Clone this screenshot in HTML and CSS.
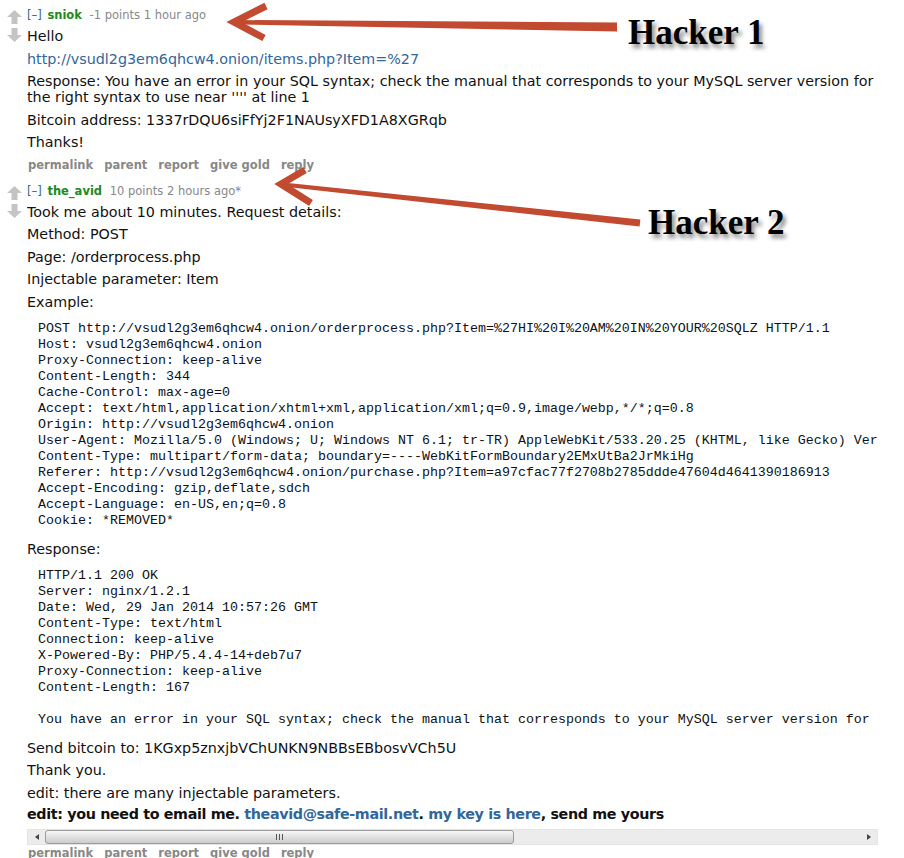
FILE: index.html
```html
<!DOCTYPE html>
<html>
<head>
<meta charset="utf-8">
<title>Comments</title>
<link rel="stylesheet" href="styles.css">
</head>
<body>
<div class="page">
  <div class="comment">
    <div class="midcol">
      <svg class="vote" viewBox="0 0 15 14"><path d="M7.5 0 L15 7 L10.5 7 L10.5 14 L4.5 14 L4.5 7 L0 7 Z"/></svg>
      <svg class="vote" viewBox="0 0 15 14"><path d="M7.5 14 L15 7 L10.5 7 L10.5 0 L4.5 0 L4.5 7 L0 7 Z"/></svg>
    </div>
    <div class="entry">
      <p class="tagline"><span class="expand">[–]</span> <span class="author">sniok</span> <span class="score">-1 points 1 hour ago</span></p>
      <div class="md">
        <p><span>Hello</span></p>
        <p><a href="#">http://vsudl2g3em6qhcw4.onion/items.php?Item=%27</a></p>
        <p>Response: You have an error in your SQL syntax; check the manual that corresponds to your MySQL server version for the right syntax to use near '''' at line 1</p>
        <p>Bitcoin address: 1337rDQU6siFfYj2F1NAUsyXFD1A8XGRqb</p>
        <p>Thanks!</p>
      </div>
      <ul class="flat-list"><li>permalink</li><li>parent</li><li>report</li><li>give gold</li><li>reply</li></ul>
    </div>
  </div>

  <div class="comment second">
    <div class="midcol">
      <svg class="vote" viewBox="0 0 15 14"><path d="M7.5 0 L15 7 L10.5 7 L10.5 14 L4.5 14 L4.5 7 L0 7 Z"/></svg>
      <svg class="vote" viewBox="0 0 15 14"><path d="M7.5 14 L15 7 L10.5 7 L10.5 0 L4.5 0 L4.5 7 L0 7 Z"/></svg>
    </div>
    <div class="entry">
      <p class="tagline"><span class="expand">[–]</span> <span class="author">the_avid</span> <span class="score">10 points 2 hours ago*</span></p>
      <div class="md">
        <p>Took me about 10 minutes. Request details:</p>
        <p>Method: POST</p>
        <p>Page: /orderprocess.php</p>
        <p>Injectable parameter: Item</p>
        <p>Example:</p>
<pre>POST http://vsudl2g3em6qhcw4.onion/orderprocess.php?Item=%27HI%20I%20AM%20IN%20YOUR%20SQLZ HTTP/1.1
Host: vsudl2g3em6qhcw4.onion
Proxy-Connection: keep-alive
Content-Length: 344
Cache-Control: max-age=0
Accept: text/html,application/xhtml+xml,application/xml;q=0.9,image/webp,*/*;q=0.8
Origin: http://vsudl2g3em6qhcw4.onion
User-Agent: Mozilla/5.0 (Windows; U; Windows NT 6.1; tr-TR) AppleWebKit/533.20.25 (KHTML, like Gecko) Version/5.0.4 Safari/533.20.27
Content-Type: multipart/form-data; boundary=----WebKitFormBoundary2EMxUtBa2JrMkiHg
Referer: http://vsudl2g3em6qhcw4.onion/purchase.php?Item=a97cfac77f2708b2785ddde47604d4641390186913
Accept-Encoding: gzip,deflate,sdch
Accept-Language: en-US,en;q=0.8
Cookie: *REMOVED*</pre>
        <p>Response:</p>
<pre>HTTP/1.1 200 OK
Server: nginx/1.2.1
Date: Wed, 29 Jan 2014 10:57:26 GMT
Content-Type: text/html
Connection: keep-alive
X-Powered-By: PHP/5.4.4-14+deb7u7
Proxy-Connection: keep-alive
Content-Length: 167

You have an error in your SQL syntax; check the manual that corresponds to your MySQL server version for the right syntax to use near ''' at line 1</pre>
        <p>Send bitcoin to: 1KGxp5znxjbVChUNKN9NBBsEBbosvVCh5U</p>
        <p>Thank you.</p>
        <p>edit: there are many injectable parameters.</p>
        <p class="last"><strong>edit: you need to email me. <a href="#">theavid@safe-mail.net</a>. <a href="#">my key is here</a>, send me yours</strong></p>
      </div>
      <div class="hscroll">
        <span class="sb-arrow sb-left"></span>
        <span class="sb-thumb"><span class="grip"></span></span>
        <span class="sb-track"></span>
        <span class="sb-arrow sb-right"></span>
      </div>
      <ul class="flat-list"><li>permalink</li><li>parent</li><li>report</li><li>give gold</li><li>reply</li></ul>
    </div>
  </div>
</div>

<svg class="annot" width="904" height="858" viewBox="0 0 904 858">
  <g fill="#c24a30" stroke="#c24a30">
    <polygon points="236,20 617,22.5 617,31.5 236,24.5" stroke="none"/>
    <polyline points="266,6 234,22 264,38" fill="none" stroke-width="7"/>
    <polygon points="283.2,182.4 640.4,219.5 639.6,226.5 282.8,186.6" stroke="none"/>
    <polyline points="305,170 281,184 311,203" fill="none" stroke-width="7"/>
  </g>
</svg>
<div class="label label-1">Hacker 1</div>
<div class="label label-2">Hacker 2</div>
</body>
</html>
```

FILE: styles.css
```css
html, body {
  margin: 0;
  padding: 0;
  background: #ffffff;
}

body {
  position: relative;
  font-family: Verdana, "DejaVu Sans", sans-serif;
  color: #111111;
}

.page {
  padding: 7px 0 0 7px;
}

.comment {
  display: flex;
  align-items: flex-start;
}

.comment.second {
  margin-top: 10px;
}

.midcol {
  width: 15px;
  margin-right: 5px;
  padding-top: 3px;
  display: flex;
  flex-direction: column;
  gap: 4px;
}

.vote {
  display: block;
  width: 15px;
  height: 14px;
  fill: #c4c4c4;
}

.entry {
  width: 851px;
}

.tagline {
  margin: 0;
  font-size: 11.5px;
  line-height: 16px;
  color: #888888;
  white-space: nowrap;
}

.expand {
  color: #336699;
  margin-right: 2px;
}

.author {
  color: #228822;
  font-weight: bold;
  margin-right: 4px;
}

.md {
  overflow: hidden;
  padding-top: 5px;
  font-size: 14.3px;
  line-height: 16px;
}

.md p {
  margin: 0 0 6.5px;
}

.md p.last {
  margin-top: -1px;
  margin-bottom: 5.5px;
}

.md a {
  color: #336699;
  text-decoration: none;
}

.md strong {
  font-weight: bold;
  letter-spacing: -0.35px;
}

.md pre {
  font-family: "Liberation Mono", "Courier New", monospace;
  font-size: 13.33px;
  line-height: 16px;
  margin: 0 0 6.5px 2px;
  padding: 4.5px 9px 5.5px;
  white-space: pre;
  color: #111111;
}

.flat-list {
  list-style: none;
  margin: 0 0 0 1px;
  padding: 0;
  display: flex;
  gap: 11px;
  font-size: 11.5px;
  font-weight: bold;
  line-height: 16px;
  color: #888888;
}

.hscroll {
  display: flex;
  height: 16px;
  margin-top: 1px;
  box-sizing: border-box;
  border: 1px solid #e4e4e4;
  background: #ececec;
}

.sb-arrow {
  width: 17px;
  display: flex;
  align-items: center;
  justify-content: center;
}

.sb-arrow::before {
  content: "";
  width: 0;
  height: 0;
  border-top: 3.5px solid transparent;
  border-bottom: 3.5px solid transparent;
}

.sb-left::before {
  border-right: 4px solid #444444;
}

.sb-right::before {
  border-left: 4px solid #444444;
}

.sb-thumb {
  width: 469px;
  box-sizing: border-box;
  border: 1px solid #9c9c9c;
  border-radius: 3px;
  background: linear-gradient(#f7f7f7, #e2e2e2 50%, #cbcbcb);
  display: flex;
  align-items: center;
  justify-content: center;
}

.grip {
  width: 7px;
  height: 6px;
  background: repeating-linear-gradient(90deg, #555555 0 1px, transparent 1px 3px);
}

.sb-track {
  flex: 1;
}

.annot {
  position: absolute;
  left: 0;
  top: 0;
  pointer-events: none;
}

.label {
  position: absolute;
  font-family: "Liberation Serif", "Times New Roman", serif;
  font-weight: bold;
  font-size: 35px;
  line-height: 35px;
  color: #000000;
  white-space: nowrap;
  text-shadow: 3px 4px 4px rgba(0, 0, 0, 0.45);
}

.label-1 {
  left: 628px;
  top: 15px;
}

.label-2 {
  left: 648px;
  top: 205px;
}
```
